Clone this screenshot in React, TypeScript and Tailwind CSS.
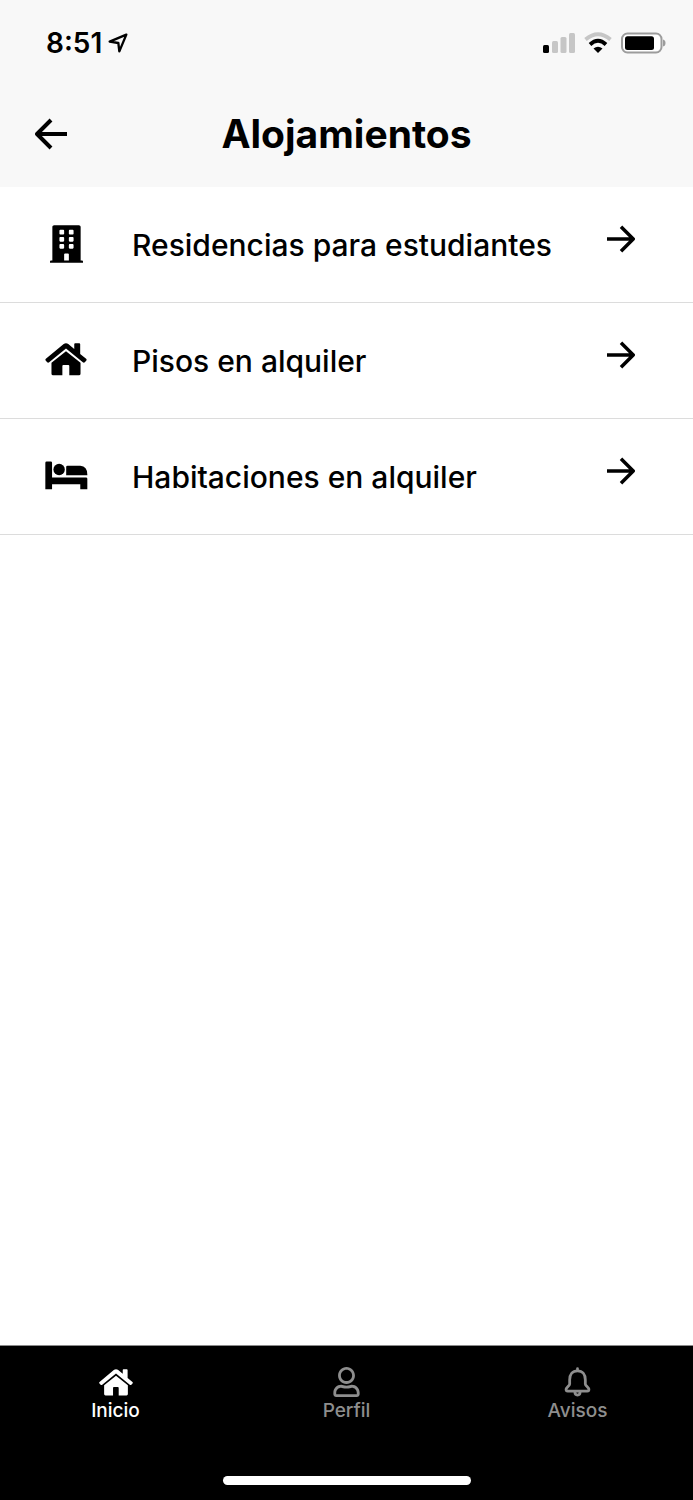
import type { ReactNode } from "react";
import { FaBuilding, FaRegUser } from "react-icons/fa";

function HomeIcon({ className }: { className: string }) {
  return (
    <svg viewBox="0 0 126 100" className={className} fill="currentColor" aria-hidden="true">
      <path d="M56 3Q63 -2 70 3L88 18V4Q88 1 91 1H103Q106 1 106 4V33L124 48Q127 51 124 54L120 58Q117 61 114 58L63 17L12 58Q9 61 6 58L2 54Q-1 51 2 48Z" />
      <path d="M63 25L107 60V93Q107 98 102 98H73V70Q73 67 70 67H55Q52 67 52 70V98H24Q19 98 19 93V60Z" />
    </svg>
  );
}

function BedIcon({ className }: { className: string }) {
  return (
    <svg viewBox="0 0 128 86" className={className} fill="currentColor" aria-hidden="true">
      <path d="M1 5Q1 1 5 1H17Q21 1 21 5V49H122Q126 49 126 53V84H105V69H21V84H1Z" />
      <circle cx="42" cy="25" r="17" />
      <path d="M63 18Q63 14 67 14H105Q126 16 126 40V42H63Z" />
    </svg>
  );
}

function BellIcon({ className }: { className: string }) {
  return (
    <svg viewBox="0 0 80 92" className={className} fill="none" stroke="currentColor" strokeWidth="8.500" strokeLinejoin="round" strokeLinecap="round" aria-hidden="true">
      <path d="M40 5V12M40 12C24 12 16 24 16 39V52C16 58 5 62 5 69Q5 74 10 74H70Q75 74 75 69C75 62 64 58 64 52V39C64 24 56 12 40 12Z" />
      <path d="M32 76Q32 86 40 86T48 76" />
    </svg>
  );
}

function ArrowIcon({ className }: { className: string }) {
  return (
    <svg viewBox="0 0 32 32" className={className} fill="none" stroke="currentColor" strokeWidth="4" aria-hidden="true">
      <path d="M0 16H29M16 2L30 16L16 30" strokeLinejoin="round" />
    </svg>
  );
}

function StatusBar() {
  return (
    <div className="flex h-[86px] items-center justify-between pr-[27px] pl-[46px]">
      <div className="flex items-center gap-1.5">
        <span className="text-[28px] leading-8 font-semibold">8:51</span>
        <svg viewBox="0 0 60 60" className="size-5" fill="none" stroke="currentColor" strokeWidth="7" strokeLinejoin="round" aria-hidden="true">
          <path d="M55 5L5 26L31 30L34 55Z" />
        </svg>
      </div>
      <div className="flex items-center gap-2">
        <svg viewBox="0 0 34 22" className="h-[22px] w-[34px]" aria-hidden="true">
          <rect x="1" y="13" width="6" height="8" rx="1.5" />
          <g fill="#c6c6c6">
            <rect x="10" y="9" width="6" height="12" rx="1.5" />
            <rect x="18.500" y="5" width="6" height="16" rx="1.500" />
            <rect x="27" y="1" width="6" height="20" rx="1.500" />
          </g>
        </svg>
        <svg viewBox="0 0 28 22" className="h-[22px] w-7" fill="none" strokeWidth="3.8" aria-hidden="true">
          <path d="M1.500 7.500Q14 -3 26.500 7.500" stroke="#c6c6c6" />
          <path d="M6 12.500Q14 5 22 12.500" stroke="black" />
          <path d="M14 21L9.500 16.500Q14 13 18.500 16.500Z" fill="black" />
        </svg>
        <svg viewBox="0 0 46 22" className="h-[22px] w-[46px]" aria-hidden="true">
          <rect x="2" y="1.500" width="39.500" height="19" rx="5.500" fill="white" stroke="#9c9c9c" strokeWidth="2" />
          <rect x="5" y="4.300" width="29" height="13.600" rx="2.500" />
          <path d="M43 7.500Q45.500 8 45.500 11T43 14.500Z" fill="#9c9c9c" />
        </svg>
      </div>
    </div>
  );
}

function Row({ icon, label }: { icon: ReactNode; label: string }) {
  return (
    <li className="border-b border-[#dcdcdc]">
      <a href="#" className="flex h-[115px] items-center pr-[58px]">
        <span className="flex w-[132px] justify-center pb-0.5">{icon}</span>
        <span className="flex-1 text-[30px] leading-10 font-medium">{label}</span>
        <span className="pb-3">
          <ArrowIcon className="size-7" />
        </span>
      </a>
    </li>
  );
}

function Tab({ icon, label, active = false }: { icon: ReactNode; label: string; active?: boolean }) {
  return (
    <a href="#" className={active ? "flex flex-1 flex-col items-center text-white" : "flex flex-1 flex-col items-center text-[#8e8e8e]"}>
      <span className="flex h-8 items-center">{icon}</span>
      <span className="text-[19px] leading-[26px] font-medium">{label}</span>
    </a>
  );
}

export default function App() {
  return (
    <div className="flex min-h-screen flex-col bg-white font-['Inter','Liberation_Sans',sans-serif] text-black">
      <header className="bg-[#f8f8f8]">
        <StatusBar />
        <div className="grid h-[101px] grid-cols-[1fr_auto_1fr] items-start px-[35px] pt-6">
          <button type="button" aria-label="Volver" className="flex h-12 w-8 items-center">
            <ArrowIcon className="size-8 rotate-180" />
          </button>
          <h1 className="text-[39px] leading-12 font-bold">Alojamientos</h1>
        </div>
      </header>
      <main className="flex-1">
        <ul>
          <Row icon={<FaBuilding className="h-[38px] w-[33px]" />} label="Residencias para estudiantes" />
          <Row icon={<HomeIcon className="h-[33px] w-[42px]" />} label="Pisos en alquiler" />
          <Row icon={<BedIcon className="h-[29px] w-[43px]" />} label="Habitaciones en alquiler" />
        </ul>
      </main>
      <footer className="flex h-[155px] flex-col items-center justify-between border-t border-[#8a8a8a] bg-black pt-5 pb-[15px]">
        <nav className="flex w-full">
          <Tab icon={<HomeIcon className="h-[27px] w-[34px]" />} label="Inicio" active />
          <Tab icon={<FaRegUser className="h-[30px] w-[27px]" />} label="Perfil" />
          <Tab icon={<BellIcon className="h-[30px] w-[27px]" />} label="Avisos" />
        </nav>
        <div className="h-[9px] w-[248px] rounded-full bg-white" />
      </footer>
    </div>
  );
}
